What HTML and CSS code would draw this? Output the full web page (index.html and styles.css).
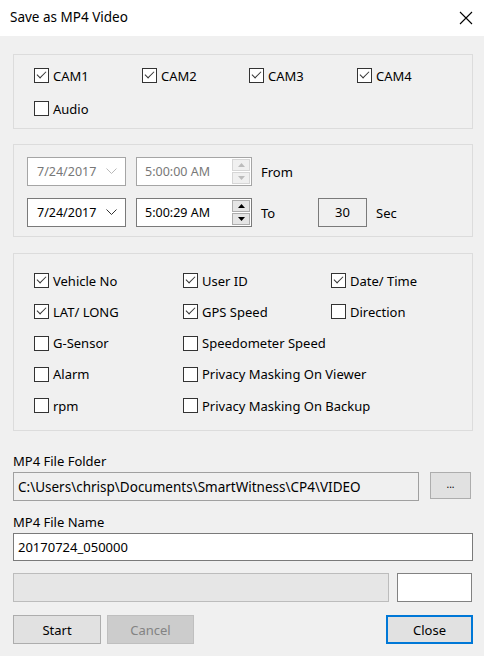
FILE: index.html
```html
<!DOCTYPE html>
<html lang="en">
<head>
    <meta charset="UTF-8">
    <meta name="viewport" content="width=device-width, initial-scale=1.0">
    <title>Save as MP4 Video</title>
    <link rel="stylesheet" href="styles.css">
</head>
<body>
    <div class="titlebar">
        <span class="title">Save as MP4 Video</span>
        <svg class="closeX" width="14" height="14" viewBox="0 0 14 14">
            <path d="M1 1 L13 13 M13 1 L1 13" stroke="#000" stroke-width="1.1" fill="none"/>
        </svg>
    </div>

    <main class="content">
        <div class="group cams">
            <label class="chk"><span class="box on"></span>CAM1</label>
            <label class="chk"><span class="box on"></span>CAM2</label>
            <label class="chk"><span class="box on"></span>CAM3</label>
            <label class="chk"><span class="box on"></span>CAM4</label>
            <label class="chk"><span class="box"></span>Audio</label>
        </div>

        <div class="group times">
            <div class="timeRow">
                <div class="datePick off">
                    <span>7/24/2017</span>
                    <svg width="11" height="7" viewBox="0 0 11 7"><path d="M0.5 0.5 L5.5 5.5 L10.5 0.5" stroke="#b8b8b8" fill="none"/></svg>
                </div>
                <div class="timePick off">
                    <span>5:00:00 AM</span>
                    <div class="spin">
                        <div class="spinBtn"><svg width="7" height="4" viewBox="0 0 7 4"><path d="M0 4 L3.5 0 L7 4 Z" fill="#bcbcbc"/></svg></div>
                        <div class="spinBtn"><svg width="7" height="4" viewBox="0 0 7 4"><path d="M0 0 L3.5 4 L7 0 Z" fill="#bcbcbc"/></svg></div>
                    </div>
                </div>
                <span class="rowLabel">From</span>
            </div>
            <div class="timeRow second">
                <div class="datePick">
                    <span>7/24/2017</span>
                    <svg width="11" height="7" viewBox="0 0 11 7"><path d="M0.5 0.5 L5.5 5.5 L10.5 0.5" stroke="#333" fill="none"/></svg>
                </div>
                <div class="timePick">
                    <span>5:00:29 AM</span>
                    <div class="spin">
                        <div class="spinBtn"><svg width="7" height="4" viewBox="0 0 7 4"><path d="M0 4 L3.5 0 L7 4 Z" fill="#000"/></svg></div>
                        <div class="spinBtn"><svg width="7" height="4" viewBox="0 0 7 4"><path d="M0 0 L3.5 4 L7 0 Z" fill="#000"/></svg></div>
                    </div>
                </div>
                <span class="rowLabel">To</span>
                <div class="secBox">30</div>
                <span class="secLabel">Sec</span>
            </div>
        </div>

        <div class="group overlay">
            <label class="chk"><span class="box on"></span>Vehicle No</label>
            <label class="chk"><span class="box on"></span>User ID</label>
            <label class="chk"><span class="box on"></span>Date/ Time</label>
            <label class="chk"><span class="box on"></span>LAT/ LONG</label>
            <label class="chk"><span class="box on"></span>GPS Speed</label>
            <label class="chk"><span class="box"></span>Direction</label>
            <label class="chk"><span class="box"></span>G-Sensor</label>
            <label class="chk wide"><span class="box"></span>Speedometer Speed</label>
            <label class="chk"><span class="box"></span>Alarm</label>
            <label class="chk wide"><span class="box"></span>Privacy Masking On Viewer</label>
            <label class="chk"><span class="box"></span>rpm</label>
            <label class="chk wide"><span class="box"></span>Privacy Masking On Backup</label>
        </div>

        <div class="fieldLabel first">MP4 File Folder</div>
        <div class="folderRow">
            <div class="textBox readOnly">C:\Users\chrisp\Documents\SmartWitness\CP4\VIDEO</div>
            <button class="btn browse">...</button>
        </div>

        <div class="fieldLabel">MP4 File Name</div>
        <div class="textBox nameBox">20170724_050000</div>

        <div class="progressRow">
            <div class="progress"></div>
            <div class="percent"></div>
        </div>

        <div class="buttonRow">
            <button class="btn">Start</button>
            <button class="btn disabled">Cancel</button>
            <button class="btn default">Close</button>
        </div>
    </main>
</body>
</html>
```

FILE: styles.css
```css
* {
    box-sizing: border-box;
}

body {
    margin: 0;
    width: 484px;
    height: 656px;
    overflow: hidden;
    background-color: #f0f0f0;
    color: #000;
    font-family: "Noto Sans", "Open Sans", sans-serif;
    font-size: 13px;
}

.titlebar {
    height: 36px;
    background-color: #fff;
    display: flex;
    align-items: center;
    justify-content: space-between;
    padding: 0 10px 0 10px;
}

.title {
    font-size: 13.5px;
    padding-bottom: 2px;
}

.closeX {
    margin-right: 1px;
}

.content {
    padding: 18px 11px 0 13px;
}

.group {
    border: 1px solid #dcdcdc;
}

/* checkboxes */
.chk {
    display: flex;
    align-items: center;
    gap: 4px;
    height: 15px;
    white-space: nowrap;
}

.box {
    width: 15px;
    height: 15px;
    border: 1px solid #333;
    background-color: #fff;
    flex: none;
    position: relative;
}

.box.on::after {
    content: "";
    position: absolute;
    left: 4px;
    top: 0px;
    width: 4px;
    height: 8px;
    border-right: 1px solid #333;
    border-bottom: 1px solid #333;
    transform: rotate(45deg);
}

.cams {
    height: 75px;
    padding: 13px 0 0 20px;
    display: grid;
    grid-template-columns: 108px 107px 108px 100px;
    grid-auto-rows: 33px;
    align-content: start;
}

/* date & time */
.times {
    margin-top: 15px;
    height: 93px;
    padding: 12px 0 0 13px;
}

.timeRow {
    display: flex;
    align-items: center;
    height: 29px;
}

.timeRow.second {
    margin-top: 12px;
}

.datePick, .timePick {
    height: 29px;
    border: 1px solid #7a7a7a;
    background-color: #fff;
    display: flex;
    align-items: center;
    justify-content: space-between;
    font-size: 12.5px;
}

.datePick {
    width: 99px;
    padding: 0 8px 0 9px;
}

.timePick {
    width: 116px;
    margin-left: 10px;
    padding: 0 1px 0 8px;
}

.off {
    border-color: #a5a5a5;
    color: #787878;
}

.spin {
    width: 18px;
    height: 25px;
    display: flex;
    flex-direction: column;
    gap: 1px;
}

.spinBtn {
    flex: 1;
    background-color: #e5e5e5;
    border: 1px solid #adadad;
    display: flex;
    align-items: center;
    justify-content: center;
}

.off .spinBtn {
    background-color: #f0f0f0;
    border-color: #d6d6d6;
}

.rowLabel {
    margin-left: 9px;
    width: 57px;
}

.secBox {
    width: 49px;
    height: 29px;
    border: 1px solid #7a7a7a;
    display: flex;
    align-items: center;
    justify-content: center;
    padding-bottom: 2px;
}

.secLabel {
    margin-left: 9px;
}

/* overlay options */
.overlay {
    margin-top: 16px;
    height: 178px;
    padding: 19px 0 0 20px;
    display: grid;
    grid-template-columns: 149px 148px 1fr;
    grid-auto-rows: 31.25px;
    align-content: start;
}

.overlay .wide {
    grid-column: span 2;
}

/* file fields */
.fieldLabel {
    margin-top: 13px;
    height: 16px;
    line-height: 16px;
}

.fieldLabel.first {
    margin-top: 22px;
}

.folderRow {
    margin-top: 3px;
    display: flex;
    align-items: flex-start;
    gap: 11px;
}

.textBox {
    height: 29px;
    border: 1px solid #7a7a7a;
    background-color: #fff;
    padding: 0 4px;
    display: flex;
    align-items: center;
    white-space: nowrap;
    overflow: hidden;
}

.readOnly {
    width: 406px;
    background-color: #f0f0f0;
    border-color: #a0a0a0;
    font-size: 13.5px;
}

.nameBox {
    margin-top: 3px;
    height: 28px;
    width: 460px;
}

.btn {
    font-family: inherit;
    font-size: 13px;
    color: #000;
    background-color: #e1e1e1;
    border: 1px solid #adadad;
    height: 29px;
    width: 88px;
    padding: 0;
}

.browse {
    width: 41px;
    height: 27px;
    font-size: 10px;
    padding-bottom: 3px;
}

.progressRow {
    margin-top: 12px;
    display: flex;
    gap: 8px;
}

.progress {
    width: 376px;
    height: 29px;
    background-color: #e6e6e6;
    border: 1px solid #bcbcbc;
}

.percent {
    width: 75px;
    height: 29px;
    background-color: #fff;
    border: 1px solid #828282;
}

.buttonRow {
    margin-top: 13px;
    display: flex;
    gap: 6px;
}

.btn.disabled {
    width: 87px;
    background-color: #cccccc;
    border-color: #bfbfbf;
    color: #838383;
}

.btn.default {
    width: 87px;
    margin-left: auto;
    border: 2px solid #0078d7;
}
```
